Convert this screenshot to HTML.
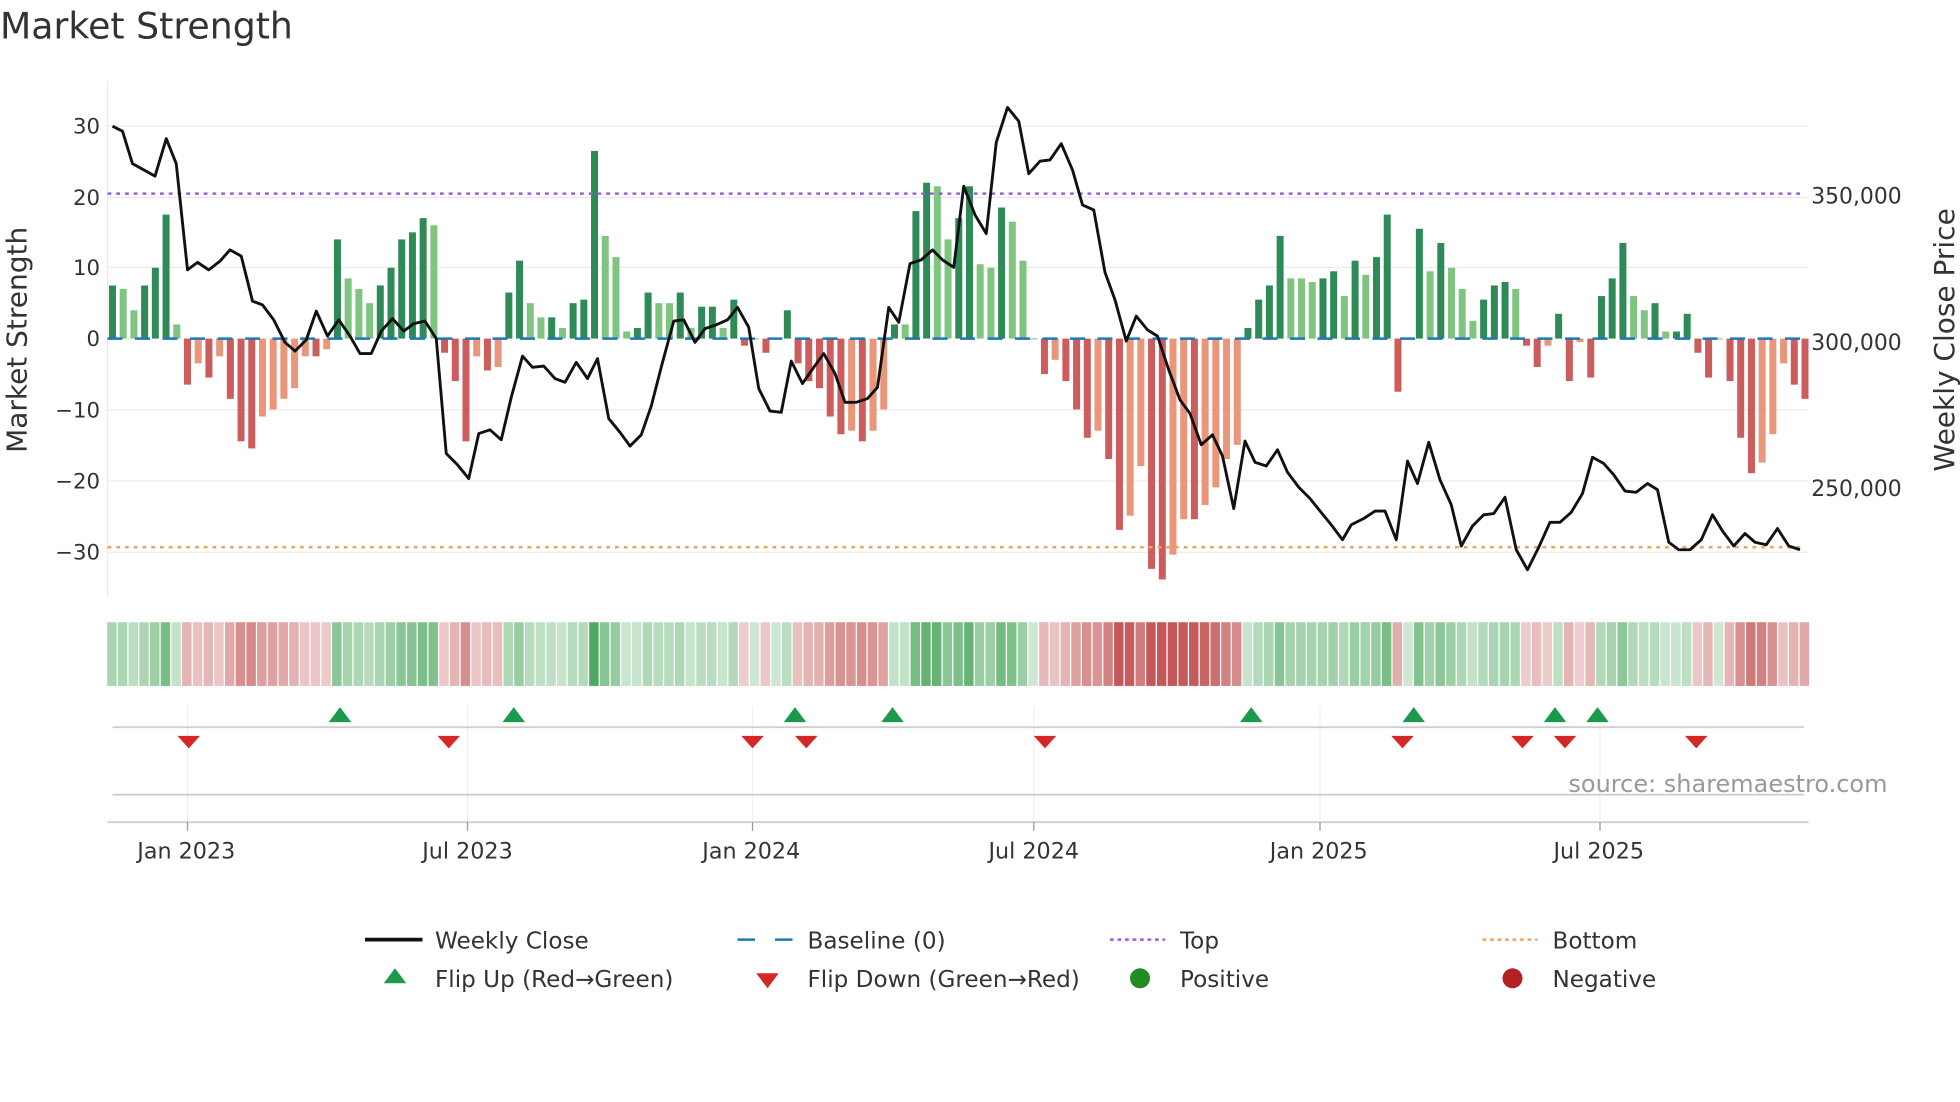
<!DOCTYPE html>
<html><head><meta charset="utf-8"><style>
html,body{margin:0;padding:0;background:#fff;}
svg{display:block;font-family:"DejaVu Sans","Liberation Sans",sans-serif;}
</style></head><body>
<svg id="s" width="1960" height="1102" viewBox="0 0 1568 882" preserveAspectRatio="none" xmlns="http://www.w3.org/2000/svg">
<rect width="1568" height="882" fill="#fff"/>
<text x="0" y="31" font-size="29" fill="#333">Market Strength</text>
<g stroke="#ececec" stroke-width="1">
<line x1="86" y1="101" x2="1447" y2="101"/><line x1="86" y1="158" x2="1447" y2="158"/>
<line x1="86" y1="214" x2="1447" y2="214"/><line x1="86" y1="328" x2="1447" y2="328"/>
<line x1="86" y1="385" x2="1447" y2="385"/><line x1="86" y1="442" x2="1447" y2="442"/>
<line x1="86" y1="65" x2="86" y2="478"/>
</g>
<g font-size="17" fill="#333" text-anchor="end">
<text x="80" y="107">30</text><text x="80" y="164">20</text><text x="80" y="220">10</text>
<text x="80" y="277">0</text><text x="80" y="334">−10</text><text x="80" y="391">−20</text><text x="80" y="448">−30</text>
</g>
<g font-size="17.5" fill="#333">
<text x="1449" y="163">350,000</text><text x="1449" y="280">300,000</text><text x="1449" y="397">250,000</text>
</g>
<text transform="translate(21,272) rotate(-90)" font-size="22.4" fill="#333" text-anchor="middle">Market Strength</text>
<text transform="translate(1563,272) rotate(-90)" font-size="22.4" fill="#333" text-anchor="middle">Weekly Close Price</text>
<g id="bars"></g>
<line x1="86" y1="271" x2="1444" y2="271" stroke="#1f77b4" stroke-width="2" stroke-dasharray="12,10"/>
<line x1="86" y1="155" x2="1444" y2="155" stroke="#9b5de5" stroke-width="2" stroke-dasharray="3,4"/>
<line x1="86" y1="438" x2="1444" y2="438" stroke="#f4a261" stroke-width="2" stroke-dasharray="3,4"/>
<polyline id="price" fill="none" stroke="#111" stroke-width="2.3" stroke-linejoin="round"/>
<g id="strip"></g>
<g stroke="#eef0f0" stroke-width="1">
<line x1="150" y1="565" x2="150" y2="665"/><line x1="374" y1="565" x2="374" y2="665"/>
<line x1="602" y1="565" x2="602" y2="665"/><line x1="827" y1="565" x2="827" y2="665"/>
<line x1="1056" y1="565" x2="1056" y2="665"/><line x1="1280" y1="565" x2="1280" y2="665"/>
</g>
<line x1="90" y1="582" x2="1443" y2="582" stroke="#cfcfcf" stroke-width="1.5"/>
<line x1="90" y1="636" x2="1443" y2="636" stroke="#cfcfcf" stroke-width="1.5"/>
<line x1="86" y1="658" x2="1447" y2="658" stroke="#cfcfcf" stroke-width="1.5"/>
<g stroke="#999" stroke-width="1">
<line x1="150" y1="658" x2="150" y2="665"/><line x1="374" y1="658" x2="374" y2="665"/>
<line x1="602" y1="658" x2="602" y2="665"/><line x1="827" y1="658" x2="827" y2="665"/>
<line x1="1056" y1="658" x2="1056" y2="665"/><line x1="1280" y1="658" x2="1280" y2="665"/>
</g>
<g id="marks"></g>
<text x="1510" y="634" font-size="19.2" fill="#999" text-anchor="end">source: sharemaestro.com</text>
<g font-size="17.8" fill="#333" text-anchor="middle">
<text x="149" y="687">Jan 2023</text><text x="374" y="687">Jul 2023</text><text x="601" y="687">Jan 2024</text>
<text x="827" y="687">Jul 2024</text><text x="1055" y="687">Jan 2025</text><text x="1279" y="687">Jul 2025</text>
</g>
<g font-size="18.5" fill="#333">
<line x1="292" y1="752" x2="338" y2="752" stroke="#111" stroke-width="3"/>
<text x="348" y="759">Weekly Close</text>
<line x1="590" y1="752" x2="634" y2="752" stroke="#1f77b4" stroke-width="2" stroke-dasharray="14,16"/>
<text x="646" y="759">Baseline (0)</text>
<line x1="888" y1="752" x2="932" y2="752" stroke="#9b5de5" stroke-width="2" stroke-dasharray="3,3"/>
<text x="944" y="759">Top</text>
<line x1="1186" y1="752" x2="1230" y2="752" stroke="#f4a261" stroke-width="2" stroke-dasharray="3,3"/>
<text x="1242" y="759">Bottom</text>
<polygon points="316,775 307,787 325,787" fill="#1a9a4a"/>
<text x="348" y="790">Flip Up (Red→Green)</text>
<polygon points="605,779 623,779 614,791" fill="#d62728"/>
<text x="646" y="790">Flip Down (Green→Red)</text>
<circle cx="912" cy="783" r="8" fill="#228b22"/>
<text x="944" y="790">Positive</text>
<circle cx="1210" cy="783" r="8" fill="#b22222"/>
<text x="1242" y="790">Negative</text>
</g>
</svg>
<script>
var NS="http://www.w3.org/2000/svg";
var D="7.5g 7l 4l 7.5g 10g 17.5g 2l -6.5r -3.5s -5.5r -2.5s -8.5r -14.5r -15.5r -11s -10s -8.5s -7s -2.5s -2.5r -1.5s 14g 8.5l 7l 5l 7.5g 10g 14g 15g 17g 16l -2r -6r -14.5r -2.5s -4.5r -4s 6.5g 11g 5l 3l 3g 1.5l 5g 5.5g 26.5g 14.5l 11.5l 1l 1.5g 6.5g 5l 5l 6.5g 1.5l 4.5g 4.5g 1.5l 5.5g -1r 0g -2r 0g 4g -3.5r -6r -7r -11r -13.5r -13s -14.5r -13s -10s 2g 2l 18g 22g 21.5l 14l 17g 21.5g 10.5l 10l 18.5g 16.5l 11l 0g -5r -3s -6r -10r -14r -13s -17r -27r -25s -18s -32.5r -34r -30.5s -25.5s -25.5r -23.5s -21s -17s -15s 1.5g 5.5g 7.5g 14.5g 8.5l 8.5l 8l 8.5g 9.5g 6l 11g 9l 11.5g 17.5g -7.5r 0g 15.5g 9.5l 13.5g 10l 7l 2.5l 5.5g 7.5g 8g 7l -1r -4r -1s 3.5g -6r -0.5s -5.5r 6g 8.5g 13.5g 6l 4l 5g 1l 1g 3.5g -2r -5.5r 0g -6r -14r -19r -17.5s -13.5s -3.5s -6.5r -8.5r".split(" ");
var C={g:"#2e8b57",l:"#7fc47f",r:"#cd5c5c",s:"#e9967a"};
var n=D.length,step=(1444-90)/(n-1),bars=document.getElementById("bars"),strip=document.getElementById("strip");
for(var i=0;i<n;i++){var v=parseFloat(D[i]),c=D[i].slice(-1),x=90+step*i;
 var h=Math.abs(v)*5.67,y=v>=0?271-h:271;
 var r=document.createElementNS(NS,"rect");r.setAttribute("x",x-2.8);r.setAttribute("y",y);r.setAttribute("width",5.6);r.setAttribute("height",Math.max(h,0.5));r.setAttribute("fill",C[c]);bars.appendChild(r);
 var s=document.createElementNS(NS,"rect");s.setAttribute("x",x-step/2);s.setAttribute("y",498);s.setAttribute("width",step-1);s.setAttribute("height",51);
 var a=Math.min(0.25+Math.abs(v)/40,0.9);
 s.setAttribute("fill",(c=="g"||c=="l")?"rgba(60,160,80,"+a+")":"rgba(190,70,70,"+a+")");strip.appendChild(s);}
var P="90,101 98,105 106,131 115,136 124,141 133,111 141,131 150,216 158,210 167,216 176,209 184,200 193,205 202,241 210,244 219,256 228,274 236,281 245,272 253,249 262,269 271,256 280,269 288,283 297,283 305,265 314,255 323,265 331,259 340,257 349,271 357,363 366,372 375,383 383,347 392,344 401,352 409,318 418,285 426,294 435,293 444,303 452,306 461,290 470,303 478,287 487,335 496,346 504,357 513,348 521,325 530,290 539,257 547,256 556,274 564,263 573,260 582,256 590,246 599,262 607,311 616,329 625,330 633,289 642,307 651,294 659,283 668,299 676,322 685,322 694,319 702,310 711,246 719,258 728,211 737,208 746,200 754,208 763,214 771,149 780,172 789,187 797,114 806,86 815,97 823,139 832,129 840,128 849,115 858,136 866,164 875,168 884,218 892,240 901,273 909,253 918,264 926,269 935,296 944,320 952,331 961,356 970,348 978,365 987,407 996,353 1004,370 1013,373 1022,360 1030,378 1039,390 1048,399 1056,409 1065,420 1074,432 1081,420 1091,415 1100,409 1108,409 1117,432 1126,369 1134,387 1143,354 1152,384 1161,404 1169,437 1178,421 1187,412 1195,411 1204,398 1213,440 1222,456 1231,438 1240,418 1248,418 1257,410 1266,395 1274,366 1283,371 1291,380 1300,393 1309,394 1318,387 1326,392 1335,434 1343,440 1352,440 1361,432 1370,412 1378,425 1387,437 1396,427 1404,434 1413,436 1422,423 1431,437 1440,440";
document.getElementById("price").setAttribute("points",P);
var m=document.getElementById("marks"),h="";
[272,411,636,714,1001,1131,1244,1278].forEach(function(x){h+='<polygon points="'+x+',566 '+(x-9)+',578 '+(x+9)+',578" fill="#1a9a4a"/>';});
[151,359,602,645,836,1122,1218,1252,1357].forEach(function(x){h+='<polygon points="'+(x-9)+',589 '+(x+9)+',589 '+x+',599" fill="#d62728"/>';});
m.innerHTML=h;
</script>
</body></html>
